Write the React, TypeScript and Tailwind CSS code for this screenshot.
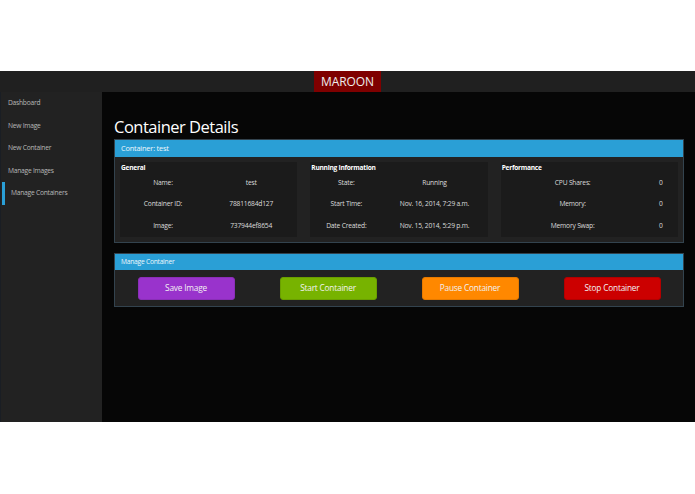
import React from 'react';

const navItems = ['Dashboard', 'New Image', 'New Container', 'Manage Images', 'Manage Containers'];

type Row = { label: string; value: string };

const infoBoxes: { title: string; col: string; rows: Row[] }[] = [
  {
    title: 'General',
    col: 'grid-cols-[84px_1fr]',
    rows: [
      { label: 'Name:', value: 'test' },
      { label: 'Container ID:', value: '78811684d127' },
      { label: 'Image:', value: '737944ef8654' },
    ],
  },
  {
    title: 'Running Information',
    col: 'grid-cols-[70px_1fr]',
    rows: [
      { label: 'State:', value: 'Running' },
      { label: 'Start Time:', value: 'Nov. 16, 2014, 7:29 a.m.' },
      { label: 'Date Created:', value: 'Nov. 15, 2014, 5:29 p.m.' },
    ],
  },
  {
    title: 'Performance',
    col: 'grid-cols-[142px_1fr]',
    rows: [
      { label: 'CPU Shares:', value: '0' },
      { label: 'Memory:', value: '0' },
      { label: 'Memory Swap:', value: '0' },
    ],
  },
];

const actions = [
  { label: 'Save Image', cls: 'bg-[#9933cc] border-[#8a2eb8]' },
  { label: 'Start Container', cls: 'bg-[#77b300] border-[#6a9f00]' },
  { label: 'Pause Container', cls: 'bg-[#ff8800] border-[#e67a00]' },
  { label: 'Stop Container', cls: 'bg-[#cc0000] border-[#b30000]' },
];

const InfoBox: React.FC<{ title: string; col: string; rows: Row[] }> = ({ title, col, rows }) => (
  <div className="flex-1 h-[75px] bg-[#1b1b1b] pl-[1px] pt-[1px]">
    <div className="h-[9px] leading-[9px] text-[6.6px] tracking-[-0.25px] font-bold text-white">{title}</div>
    {rows.map(r => (
      <div
        key={r.label}
        className={`grid ${col} h-[21.5px] items-center text-center text-[6.7px] tracking-[-0.2px] text-[#dcdcdc]`}
      >
        <span>{r.label}</span>
        <span>{r.value}</span>
      </div>
    ))}
  </div>
);

export default function App() {
  return (
    <div className="w-[695px] h-[494px] bg-white pt-[71px] font-['Open_Sans','Noto_Sans',sans-serif]">
      <div className="h-[351px] flex flex-col bg-[#060606]">
        {/* Top bar */}
        <div className="h-[21px] bg-[#202020] flex justify-center">
          <div className="w-[67px] bg-[#7f0000] flex items-center justify-center text-[12px] tracking-[-0.1px] text-[#eeeeee]">
            MAROON
          </div>
        </div>

        <div className="flex flex-1 min-h-0">
          {/* Sidebar */}
          <div className="w-[102px] bg-[#222222] border-l-[1px] border-[#1a1e24]">
            {navItems.map(item => {
              const active = item === 'Manage Containers';
              return (
                <div
                  key={item}
                  className={`h-[22.5px] flex items-center text-[6.7px] tracking-[-0.25px] text-[#b8b8b8] ${
                    active ? 'pl-[6px] border-l-[3px] border-[#2a9fd6] ml-[1px]' : 'pl-[7px]'
                  }`}
                >
                  {item}
                </div>
              );
            })}
          </div>

          {/* Main */}
          <div className="flex-1 pl-[12px] pr-[11px] pt-[22px]">
            <h1 className="h-[25px] leading-[25px] text-[16.5px] tracking-[-0.5px] text-white">Container Details</h1>

            <div className="border border-[#33434e] bg-[#222222]">
              <div className="h-[17px] bg-[#2a9fd6] flex items-center pl-[6px] text-[7.4px] tracking-[-0.2px] text-[#eef7fc]">
                Container: test
              </div>
              <div className="flex gap-[13px] px-[5px] pt-[5px] pb-[5px]">
                {infoBoxes.map(b => (
                  <InfoBox key={b.title} {...b} />
                ))}
              </div>
            </div>

            <div className="mt-[10px] border border-[#33434e] bg-[#222222]">
              <div className="h-[16px] bg-[#2a9fd6] flex items-center pl-[6px] text-[6.7px] tracking-[-0.25px] text-[#eef7fc]">
                Manage Container
              </div>
              <div className="grid grid-cols-4 pt-[7px] pb-[6px]">
                {actions.map(a => (
                  <div key={a.label} className="flex justify-center">
                    <button
                      className={`w-[97px] h-[23px] rounded-[3px] border text-[8.3px] tracking-[-0.2px] text-[#f2f2f2] ${a.cls}`}
                    >
                      {a.label}
                    </button>
                  </div>
                ))}
              </div>
            </div>
          </div>
        </div>
      </div>
    </div>
  );
}
